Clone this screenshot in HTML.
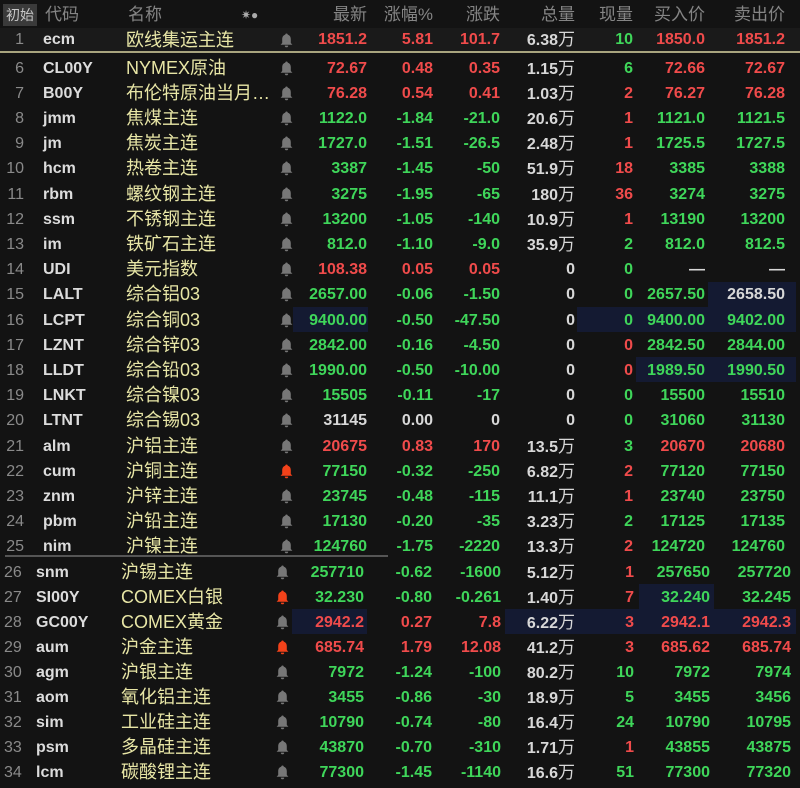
<!DOCTYPE html>
<html><head><meta charset="utf-8"><style>
*{margin:0;padding:0;box-sizing:border-box}
body{width:800px;height:788px;background:#131313;overflow:hidden;position:relative;font-family:"Liberation Sans","Noto Sans CJK SC",sans-serif;}
.r{position:absolute;left:0;width:800px;height:25px;line-height:25px;font-size:16px;font-weight:bold;white-space:nowrap}
.r span{position:absolute;top:0}
i{font-style:normal}
.n{color:#8a8a8a;font-weight:normal;width:24px;text-align:right;left:0}
.c{color:#dcdcdc;left:43px}
.m{color:#e8e6a6;left:126px;font-weight:normal;font-size:18px}
.b{position:absolute;left:280px;top:5px;width:13px;height:15px}
.v1,.v2,.v3,.v4,.v5,.v6,.v7{text-align:right}
.v1{right:433px}.v2{right:367px}.v3{right:300px}.v4{right:225px}.v5{right:167px}.v6{right:95px}.v7{right:15px}
.B .n{text-align:left;width:auto;left:4px}
.B .c{left:36px}.B .m{left:121px}.B .b{left:276px}
.B .v1{right:436px}.B .v2{right:368px}.B .v3{right:299px}.B .v4{right:225px}.B .v5{right:166px}.B .v6{right:90px}.B .v7{right:9px}
.g{color:#3fd65a}.d{color:#f04b4b}.w{color:#d8d8d8}
.k{font-weight:normal;font-size:17px}
.hl{position:absolute;background:#141a32}
.h{position:absolute;top:0;height:28px;line-height:30px;font-size:17px;color:#858585}
</style></head><body>
<svg width="0" height="0" style="position:absolute"><defs><symbol id="bell" viewBox="0 0 13 15"><path d="M6.5 0.5c-.8 0-1.2.5-1.2 1.1C3 2.3 2.2 4.2 2.2 6.2V10L0.6 11.8h11.8L10.8 10V6.2c0-2-.8-3.9-3.1-4.6 0-.6-.4-1.1-1.2-1.1zM4.8 12.6h3.4a1.7 1.7 0 0 1-3.4 0z" fill="currentColor"/></symbol></defs></svg>
<div class="hl" style="left:708px;top:282px;width:88px;height:25px"></div>
<div class="hl" style="left:293px;top:307px;width:75px;height:25px"></div>
<div class="hl" style="left:577px;top:307px;width:219px;height:25px"></div>
<div class="hl" style="left:636px;top:357px;width:160px;height:25px"></div>
<div class="hl" style="left:639px;top:584px;width:75px;height:25px"></div>
<div class="hl" style="left:292px;top:609px;width:75px;height:25px"></div>
<div class="hl" style="left:505px;top:609px;width:291px;height:25px"></div>
<div style="position:absolute;left:3px;top:4px;width:34px;height:22px;background:#3a3a3a;color:#c8c8c8;font-size:14px;line-height:22px;text-align:center">初始</div>
<div class="h" style="left:45px">代码</div>
<div class="h" style="left:128px">名称</div>
<div class="h" style="left:241px;font-size:12px;color:#aaa">✷●</div>
<div class="h" style="right:433px">最新</div>
<div class="h" style="right:367px">涨幅%</div>
<div class="h" style="right:300px">涨跌</div>
<div class="h" style="right:225px">总量</div>
<div class="h" style="right:167px">现量</div>
<div class="h" style="right:95px">买入价</div>
<div class="h" style="right:15px">卖出价</div>
<div style="position:absolute;left:0;top:28px;width:800px;height:24px;background:#1a1a1a"></div>
<div style="position:absolute;left:0;top:51px;width:800px;height:2px;background:#a8a47e"></div>
<div style="position:absolute;left:5px;top:555px;width:383px;height:2px;background:#555"></div>

<div class="r" style="top:28px;height:24px;line-height:24px"><span class="n">1</span><span class="c">ecm</span><span class="m">欧线集运主连</span><svg class="b" style="color:#777"><use href="#bell"/></svg><span class="v1 d">1851.2</span><span class="v2 d">5.81</span><span class="v3 d">101.7</span><span class="v4 w">6.38<i class="k">万</i></span><span class="v5 g">10</span><span class="v6 d">1850.0</span><span class="v7 d">1851.2</span></div>
<div class="r" style="top:55.5px"><span class="n">6</span><span class="c">CL00Y</span><span class="m">NYMEX原油</span><svg class="b" style="color:#777"><use href="#bell"/></svg><span class="v1 d">72.67</span><span class="v2 d">0.48</span><span class="v3 d">0.35</span><span class="v4 w">1.15<i class="k">万</i></span><span class="v5 g">6</span><span class="v6 d">72.66</span><span class="v7 d">72.67</span></div>
<div class="r" style="top:80.7px"><span class="n">7</span><span class="c">B00Y</span><span class="m">布伦特原油当月…</span><svg class="b" style="color:#777"><use href="#bell"/></svg><span class="v1 d">76.28</span><span class="v2 d">0.54</span><span class="v3 d">0.41</span><span class="v4 w">1.03<i class="k">万</i></span><span class="v5 d">2</span><span class="v6 d">76.27</span><span class="v7 d">76.28</span></div>
<div class="r" style="top:105.9px"><span class="n">8</span><span class="c">jmm</span><span class="m">焦煤主连</span><svg class="b" style="color:#777"><use href="#bell"/></svg><span class="v1 g">1122.0</span><span class="v2 g">-1.84</span><span class="v3 g">-21.0</span><span class="v4 w">20.6<i class="k">万</i></span><span class="v5 d">1</span><span class="v6 g">1121.0</span><span class="v7 g">1121.5</span></div>
<div class="r" style="top:131.1px"><span class="n">9</span><span class="c">jm</span><span class="m">焦炭主连</span><svg class="b" style="color:#777"><use href="#bell"/></svg><span class="v1 g">1727.0</span><span class="v2 g">-1.51</span><span class="v3 g">-26.5</span><span class="v4 w">2.48<i class="k">万</i></span><span class="v5 d">1</span><span class="v6 g">1725.5</span><span class="v7 g">1727.5</span></div>
<div class="r" style="top:156.3px"><span class="n">10</span><span class="c">hcm</span><span class="m">热卷主连</span><svg class="b" style="color:#777"><use href="#bell"/></svg><span class="v1 g">3387</span><span class="v2 g">-1.45</span><span class="v3 g">-50</span><span class="v4 w">51.9<i class="k">万</i></span><span class="v5 d">18</span><span class="v6 g">3385</span><span class="v7 g">3388</span></div>
<div class="r" style="top:181.5px"><span class="n">11</span><span class="c">rbm</span><span class="m">螺纹钢主连</span><svg class="b" style="color:#777"><use href="#bell"/></svg><span class="v1 g">3275</span><span class="v2 g">-1.95</span><span class="v3 g">-65</span><span class="v4 w">180<i class="k">万</i></span><span class="v5 d">36</span><span class="v6 g">3274</span><span class="v7 g">3275</span></div>
<div class="r" style="top:206.7px"><span class="n">12</span><span class="c">ssm</span><span class="m">不锈钢主连</span><svg class="b" style="color:#777"><use href="#bell"/></svg><span class="v1 g">13200</span><span class="v2 g">-1.05</span><span class="v3 g">-140</span><span class="v4 w">10.9<i class="k">万</i></span><span class="v5 d">1</span><span class="v6 g">13190</span><span class="v7 g">13200</span></div>
<div class="r" style="top:231.9px"><span class="n">13</span><span class="c">im</span><span class="m">铁矿石主连</span><svg class="b" style="color:#777"><use href="#bell"/></svg><span class="v1 g">812.0</span><span class="v2 g">-1.10</span><span class="v3 g">-9.0</span><span class="v4 w">35.9<i class="k">万</i></span><span class="v5 g">2</span><span class="v6 g">812.0</span><span class="v7 g">812.5</span></div>
<div class="r" style="top:257.1px"><span class="n">14</span><span class="c">UDI</span><span class="m">美元指数</span><svg class="b" style="color:#777"><use href="#bell"/></svg><span class="v1 d">108.38</span><span class="v2 d">0.05</span><span class="v3 d">0.05</span><span class="v4 w">0</span><span class="v5 g">0</span><span class="v6 w">—</span><span class="v7 w">—</span></div>
<div class="r" style="top:282.3px"><span class="n">15</span><span class="c">LALT</span><span class="m">综合铝03</span><svg class="b" style="color:#777"><use href="#bell"/></svg><span class="v1 g">2657.00</span><span class="v2 g">-0.06</span><span class="v3 g">-1.50</span><span class="v4 w">0</span><span class="v5 g">0</span><span class="v6 g">2657.50</span><span class="v7 w">2658.50</span></div>
<div class="r" style="top:307.5px"><span class="n">16</span><span class="c">LCPT</span><span class="m">综合铜03</span><svg class="b" style="color:#777"><use href="#bell"/></svg><span class="v1 g">9400.00</span><span class="v2 g">-0.50</span><span class="v3 g">-47.50</span><span class="v4 w">0</span><span class="v5 g">0</span><span class="v6 g">9400.00</span><span class="v7 g">9402.00</span></div>
<div class="r" style="top:332.7px"><span class="n">17</span><span class="c">LZNT</span><span class="m">综合锌03</span><svg class="b" style="color:#777"><use href="#bell"/></svg><span class="v1 g">2842.00</span><span class="v2 g">-0.16</span><span class="v3 g">-4.50</span><span class="v4 w">0</span><span class="v5 d">0</span><span class="v6 g">2842.50</span><span class="v7 g">2844.00</span></div>
<div class="r" style="top:357.9px"><span class="n">18</span><span class="c">LLDT</span><span class="m">综合铅03</span><svg class="b" style="color:#777"><use href="#bell"/></svg><span class="v1 g">1990.00</span><span class="v2 g">-0.50</span><span class="v3 g">-10.00</span><span class="v4 w">0</span><span class="v5 d">0</span><span class="v6 g">1989.50</span><span class="v7 g">1990.50</span></div>
<div class="r" style="top:383.1px"><span class="n">19</span><span class="c">LNKT</span><span class="m">综合镍03</span><svg class="b" style="color:#777"><use href="#bell"/></svg><span class="v1 g">15505</span><span class="v2 g">-0.11</span><span class="v3 g">-17</span><span class="v4 w">0</span><span class="v5 g">0</span><span class="v6 g">15500</span><span class="v7 g">15510</span></div>
<div class="r" style="top:408.3px"><span class="n">20</span><span class="c">LTNT</span><span class="m">综合锡03</span><svg class="b" style="color:#777"><use href="#bell"/></svg><span class="v1 w">31145</span><span class="v2 w">0.00</span><span class="v3 w">0</span><span class="v4 w">0</span><span class="v5 g">0</span><span class="v6 g">31060</span><span class="v7 g">31130</span></div>
<div class="r" style="top:433.5px"><span class="n">21</span><span class="c">alm</span><span class="m">沪铝主连</span><svg class="b" style="color:#777"><use href="#bell"/></svg><span class="v1 d">20675</span><span class="v2 d">0.83</span><span class="v3 d">170</span><span class="v4 w">13.5<i class="k">万</i></span><span class="v5 g">3</span><span class="v6 d">20670</span><span class="v7 d">20680</span></div>
<div class="r" style="top:458.7px"><span class="n">22</span><span class="c">cum</span><span class="m">沪铜主连</span><svg class="b" style="color:#f2421a"><use href="#bell"/></svg><span class="v1 g">77150</span><span class="v2 g">-0.32</span><span class="v3 g">-250</span><span class="v4 w">6.82<i class="k">万</i></span><span class="v5 d">2</span><span class="v6 g">77120</span><span class="v7 g">77150</span></div>
<div class="r" style="top:483.9px"><span class="n">23</span><span class="c">znm</span><span class="m">沪锌主连</span><svg class="b" style="color:#777"><use href="#bell"/></svg><span class="v1 g">23745</span><span class="v2 g">-0.48</span><span class="v3 g">-115</span><span class="v4 w">11.1<i class="k">万</i></span><span class="v5 d">1</span><span class="v6 g">23740</span><span class="v7 g">23750</span></div>
<div class="r" style="top:509.1px"><span class="n">24</span><span class="c">pbm</span><span class="m">沪铅主连</span><svg class="b" style="color:#777"><use href="#bell"/></svg><span class="v1 g">17130</span><span class="v2 g">-0.20</span><span class="v3 g">-35</span><span class="v4 w">3.23<i class="k">万</i></span><span class="v5 g">2</span><span class="v6 g">17125</span><span class="v7 g">17135</span></div>
<div class="r" style="top:534.3px;height:20px;overflow:hidden"><span class="n">25</span><span class="c">nim</span><span class="m">沪镍主连</span><svg class="b" style="color:#777"><use href="#bell"/></svg><span class="v1 g">124760</span><span class="v2 g">-1.75</span><span class="v3 g">-2220</span><span class="v4 w">13.3<i class="k">万</i></span><span class="v5 d">2</span><span class="v6 g">124720</span><span class="v7 g">124760</span></div>

<div class="r B" style="top:559.5px"><span class="n">26</span><span class="c">snm</span><span class="m">沪锡主连</span><svg class="b" style="color:#777"><use href="#bell"/></svg><span class="v1 g">257710</span><span class="v2 g">-0.62</span><span class="v3 g">-1600</span><span class="v4 w">5.12<i class="k">万</i></span><span class="v5 d">1</span><span class="v6 g">257650</span><span class="v7 g">257720</span></div>
<div class="r B" style="top:584.6px"><span class="n">27</span><span class="c">SI00Y</span><span class="m">COMEX白银</span><svg class="b" style="color:#f2421a"><use href="#bell"/></svg><span class="v1 g">32.230</span><span class="v2 g">-0.80</span><span class="v3 g">-0.261</span><span class="v4 w">1.40<i class="k">万</i></span><span class="v5 d">7</span><span class="v6 g">32.240</span><span class="v7 g">32.245</span></div>
<div class="r B" style="top:609.7px"><span class="n">28</span><span class="c">GC00Y</span><span class="m">COMEX黄金</span><svg class="b" style="color:#777"><use href="#bell"/></svg><span class="v1 d">2942.2</span><span class="v2 d">0.27</span><span class="v3 d">7.8</span><span class="v4 w">6.22<i class="k">万</i></span><span class="v5 d">3</span><span class="v6 d">2942.1</span><span class="v7 d">2942.3</span></div>
<div class="r B" style="top:634.8px"><span class="n">29</span><span class="c">aum</span><span class="m">沪金主连</span><svg class="b" style="color:#f2421a"><use href="#bell"/></svg><span class="v1 d">685.74</span><span class="v2 d">1.79</span><span class="v3 d">12.08</span><span class="v4 w">41.2<i class="k">万</i></span><span class="v5 d">3</span><span class="v6 d">685.62</span><span class="v7 d">685.74</span></div>
<div class="r B" style="top:659.9px"><span class="n">30</span><span class="c">agm</span><span class="m">沪银主连</span><svg class="b" style="color:#777"><use href="#bell"/></svg><span class="v1 g">7972</span><span class="v2 g">-1.24</span><span class="v3 g">-100</span><span class="v4 w">80.2<i class="k">万</i></span><span class="v5 g">10</span><span class="v6 g">7972</span><span class="v7 g">7974</span></div>
<div class="r B" style="top:685px"><span class="n">31</span><span class="c">aom</span><span class="m">氧化铝主连</span><svg class="b" style="color:#777"><use href="#bell"/></svg><span class="v1 g">3455</span><span class="v2 g">-0.86</span><span class="v3 g">-30</span><span class="v4 w">18.9<i class="k">万</i></span><span class="v5 g">5</span><span class="v6 g">3455</span><span class="v7 g">3456</span></div>
<div class="r B" style="top:710.1px"><span class="n">32</span><span class="c">sim</span><span class="m">工业硅主连</span><svg class="b" style="color:#777"><use href="#bell"/></svg><span class="v1 g">10790</span><span class="v2 g">-0.74</span><span class="v3 g">-80</span><span class="v4 w">16.4<i class="k">万</i></span><span class="v5 g">24</span><span class="v6 g">10790</span><span class="v7 g">10795</span></div>
<div class="r B" style="top:735.2px"><span class="n">33</span><span class="c">psm</span><span class="m">多晶硅主连</span><svg class="b" style="color:#777"><use href="#bell"/></svg><span class="v1 g">43870</span><span class="v2 g">-0.70</span><span class="v3 g">-310</span><span class="v4 w">1.71<i class="k">万</i></span><span class="v5 d">1</span><span class="v6 g">43855</span><span class="v7 g">43875</span></div>
<div class="r B" style="top:760.3px"><span class="n">34</span><span class="c">lcm</span><span class="m">碳酸锂主连</span><svg class="b" style="color:#777"><use href="#bell"/></svg><span class="v1 g">77300</span><span class="v2 g">-1.45</span><span class="v3 g">-1140</span><span class="v4 w">16.6<i class="k">万</i></span><span class="v5 g">51</span><span class="v6 g">77300</span><span class="v7 g">77320</span></div>
</body></html>
